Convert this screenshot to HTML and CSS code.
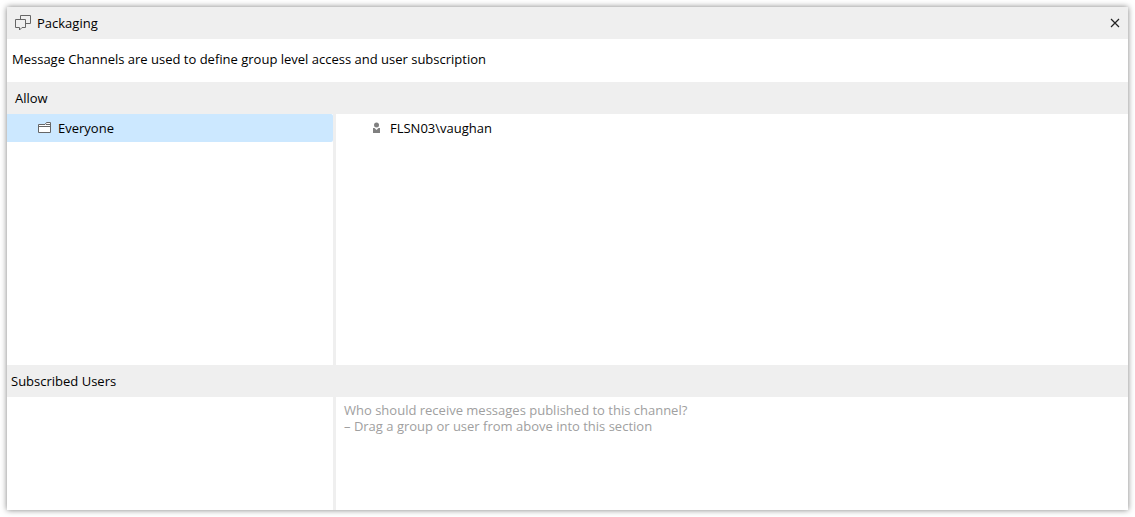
FILE: index.html
```
<!DOCTYPE html>
<html lang="en">
<head>
<meta charset="utf-8">
<meta name="viewport" content="width=device-width, initial-scale=1">
<title>Packaging</title>
<link rel="stylesheet" href="styles.css">
</head>
<body>
<main class="window">
  <header class="titlebar">
    <svg class="channel-icon" width="16" height="16" viewBox="0 0 16 16" fill="none" stroke="#666" aria-hidden="true">
      <path d="M5.500 4.500V.500H15.500V8.500H11"/>
      <path d="M.500 4.500H10.500V12.500H7L4.500 15V12.500H.500Z"/>
    </svg>
    <h1 class="title">Packaging</h1>
    <button class="close" type="button" aria-label="Close">
      <svg width="10" height="10" viewBox="0 0 10 10" stroke="#222" stroke-width="1.200" aria-hidden="true"><path d="M1 1L9 9M9 1L1 9"/></svg>
    </button>
  </header>
  <p class="description">Message Channels are used to define group level access and user subscription</p>
  <h2 class="section-title section-title-allow">Allow</h2>
  <section class="panes panes-allow">
    <ul class="pane list">
      <li><button class="item selected" type="button">
        <svg class="icon" width="14" height="12" viewBox="0 0 14 12" fill="none" stroke="#666" aria-hidden="true"><path fill="#fff" d="M.500 2.500H7L8.500 .500H12.500V10.500H.500Z"/><path d="M.500 4.500H12.500M8 2.500H12.500"/></svg>
        <span>Everyone</span>
      </button></li>
    </ul>
    <ul class="pane list">
      <li><button class="item user" type="button">
        <svg class="icon" width="14" height="12" viewBox="0 0 14 12" fill="#808080" aria-hidden="true"><circle cx="6.500" cy="3" r="2.500"/><path d="M3 6H4.500L6.500 8L8.500 6H10V11H3Z"/></svg>
        <span>FLSN03\vaughan</span>
      </button></li>
    </ul>
  </section>
  <h2 class="section-title">Subscribed Users</h2>
  <section class="panes">
    <div class="pane"></div>
    <div class="pane hint">
      <p>Who should receive messages published to this channel?</p>
      <p>– Drag a group or user from above into this section</p>
    </div>
  </section>
</main>
</body>
</html>
```
FILE: styles.css
```
* {
  box-sizing: border-box;
}

body {
  margin: 0;
  padding: 7px;
  min-height: 100vh;
  display: flex;
  background: #fff;
  color: #000;
  font: 13px/16px "Open Sans", "Noto Sans", sans-serif;
}

h1, h2, p, ul {
  margin: 0;
  padding: 0;
  font: inherit;
}

ul {
  list-style: none;
}

button {
  border: 0;
  background: none;
  color: inherit;
  font: inherit;
}

.window {
  flex: 1;
  display: flex;
  flex-direction: column;
  background: #fff;
  box-shadow: 0 0 6px rgba(0, 0, 0, 0.5);
}

.titlebar {
  display: flex;
  align-items: center;
  gap: 6px;
  height: 32px;
  padding: 0 8px;
  background: #efefef;
}

.title {
  flex: 1;
}

.close {
  display: flex;
  padding: 0;
}

.description {
  padding: 12px 5px 15px;
}

.section-title {
  padding: 8px 4px;
  background: #efefef;
}

.section-title-allow {
  padding-left: 8px;
}

.panes {
  flex: 113;
  display: grid;
  grid-template-columns: minmax(120px, 326fr) minmax(160px, 792fr);
  gap: 3px;
  background: #efefef;
}

.panes-allow {
  flex: 251;
}

.pane {
  background: #fff;
}

.item {
  display: flex;
  align-items: center;
  gap: 6px;
  width: 100%;
  height: 28px;
  padding: 0 31px;
  text-align: left;
}

.user {
  padding-left: 34px;
}

.selected {
  background: #cce8ff;
  border-radius: 0 2px 2px 0;
}

.hint {
  padding: 5px 8px;
  color: #a0a0a0;
}
```
